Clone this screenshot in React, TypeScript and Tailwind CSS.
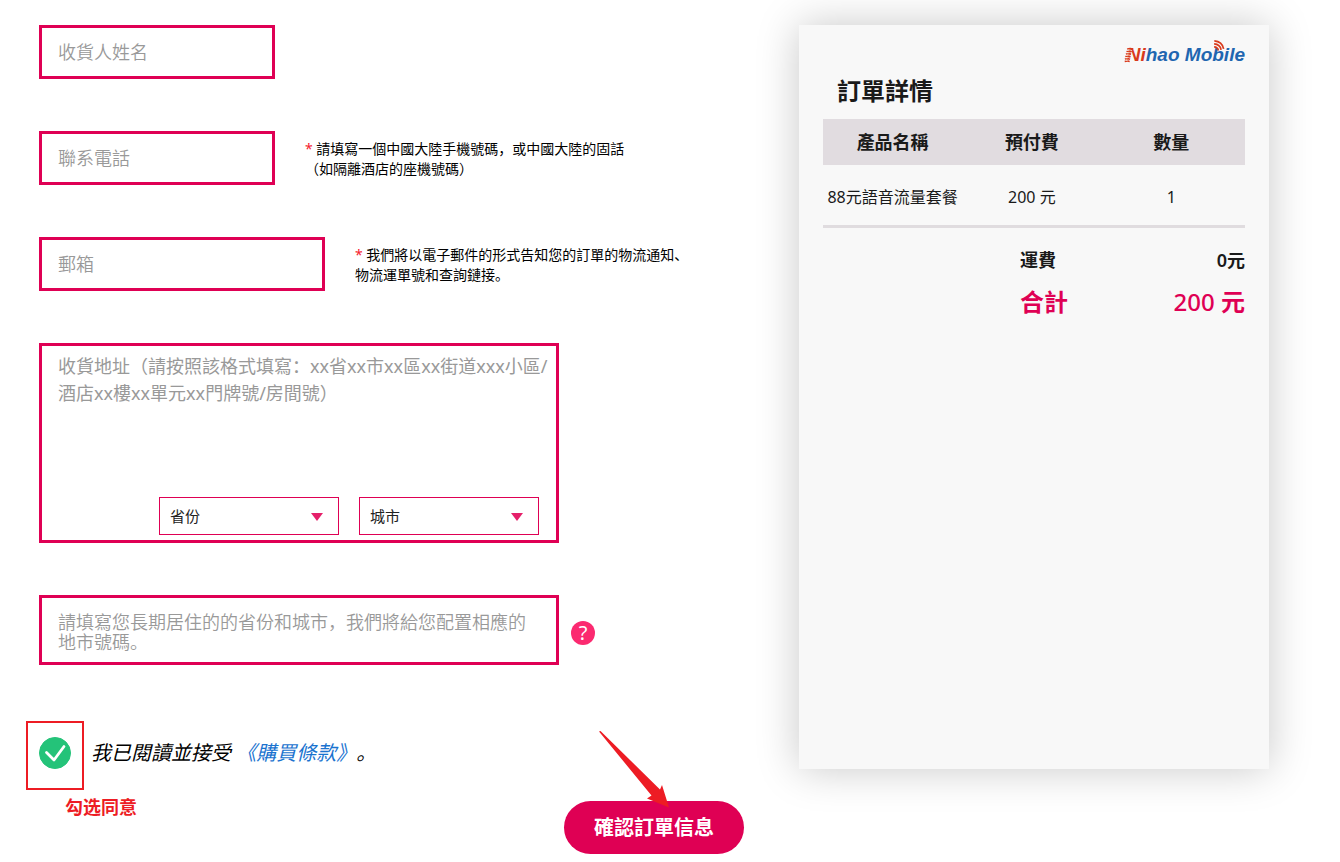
import { useState } from "react";

const PROVINCES = ["北京", "上海", "廣東"];
const CITIES = ["北京", "上海", "廣州", "深圳"];

const PRODUCTS = [{ name: "88元語音流量套餐", fee: 200, count: 1 }];

interface FieldProps {
  label: string;
  type: string;
  wide?: boolean;
  children?: React.ReactNode;
}

function Field({ label, type, wide, children }: FieldProps) {
  return (
    <div className="flex items-center gap-[30px]">
      <input
        type={type}
        aria-label={label}
        placeholder={label}
        className={`h-[54px] shrink-0 border-3 border-[#df0054] bg-white px-4 text-lg font-[350] outline-none placeholder:text-[#999] ${
          wide ? "w-[286px]" : "w-[236px]"
        }`}
      />

      {children && <p className="mt-[2px] text-sm leading-5">{children}</p>}
    </div>
  );
}

interface SelectProps {
  label: string;
  options: string[];
}

function Select({ label, options }: SelectProps) {
  return (
    <div className="relative w-[180px]">
      <select
        aria-label={label}
        defaultValue=""
        className="h-[38px] w-full appearance-none border border-[#df0054] bg-white px-[10px] text-[15px] text-[#222] outline-none"
      >
        <option value="">{label}</option>
        {options.map((option) => (
          <option key={option}>{option}</option>
        ))}
      </select>

      <svg
        viewBox="0 0 12 8"
        className="pointer-events-none absolute right-4 top-4 h-2 w-3 fill-[#e5206a]"
      >
        <path d="M0 0h12L6 8z" />
      </svg>
    </div>
  );
}

function Logo() {
  return (
    <div className="relative ml-auto w-fit font-['Liberation_Sans',sans-serif] text-[19px] font-bold italic leading-8 text-[#1f66b0]">
      <span className="text-[#d93a1c]">Ni</span>hao Mobile
      {/* stripes beside the N and the signal over the b */}
      <svg
        viewBox="0 0 118 32"
        fill="none"
        className="absolute inset-0 h-full w-full overflow-visible"
      >
        <g stroke="#d93a1c" strokeWidth="1.400">
          <path d="M0 10.200q3-1.500 6 0M-.6 12.700q3-1.500 5 0M-1.200 15.200q3-1.500 5 0M-1.800 17.700q3-1.500 5 0M-2.200 20.200q3-1.500 5 0M-2.400 22.500q3-1 5 0" />
        </g>
        <g stroke="#f8f8f8" strokeWidth="0.7">
          <path d="M0 11.500q3-1 5 .2M0 14q3-1 5 .2M-1 16.500q3-1 5 .2M-1 19q3-1 4 .2M-1 21.500q3-1 4 .2" />
        </g>
        <g stroke="#d93a1c" strokeWidth="1.700">
          <path d="M87 7.800q3.500 .2 4.300 3.700M87 4.900q6 .4 7 6M87.200 1.900q7.800 .5 9.300 8" />
        </g>
      </svg>
    </div>
  );
}

function OrderDetails() {
  const total = PRODUCTS.reduce((sum, item) => sum + item.fee * item.count, 0);

  return (
    <aside className="w-[470px] shrink-0 bg-[#f8f8f8] px-6 pt-[14px] text-[#1a1a1a] shadow-[0_0_40px_rgba(0,0,0,0.22)]">
      <Logo />

      <h2 className="ml-[14px] text-2xl font-bold leading-10">訂單詳情</h2>

      <table className="mt-2 w-full table-fixed border-b-3 border-[#e0dcdf] text-center">
        <thead className="h-[46px] bg-[#e1dce0] text-lg">
          <tr>
            <th className="w-[33%]">產品名稱</th>
            <th className="w-[33%]">預付費</th>
            <th className="pr-1">數量</th>
          </tr>
        </thead>
        <tbody>
          {PRODUCTS.map((item) => (
            <tr key={item.name} className="h-[61px]">
              <td className="whitespace-nowrap pt-1">{item.name}</td>
              <td className="pt-1">{item.fee} 元</td>
              <td className="pr-1 pt-1">{item.count}</td>
            </tr>
          ))}
        </tbody>
      </table>

      <dl className="ml-auto mt-4 flex w-[225px] flex-col gap-[10px] font-bold">
        <div className="flex justify-between text-lg leading-8">
          <dt>運費</dt>
          <dd>
            <span className="font-semibold">0</span>元
          </dd>
        </div>
        <div className="flex justify-between text-2xl leading-8 text-[#df0054]">
          <dt>合計</dt>
          <dd>
            <span className="font-medium">{total}</span> 元
          </dd>
        </div>
      </dl>
    </aside>
  );
}

export default function App() {
  const [accepted, setAccepted] = useState(true);

  return (
    <main className="bg-white pb-2 pl-[39px] pr-[71px] pt-[25px] font-['Noto_Sans','Noto_Sans_CJK_SC',sans-serif] text-black [text-spacing-trim:space-all]">
      <form onSubmit={(e) => e.preventDefault()}>
        <div className="flex justify-between gap-10">
          <div className="flex flex-col gap-[52px]">
            <Field label="收貨人姓名" type="text" />

            <Field label="聯系電話" type="tel">
              <span className="text-[#f5222d]">*</span>{" "}
              請填寫一個中國大陸手機號碼，或中國大陸的固話
              <br />
              （如隔離酒店的座機號碼）
            </Field>

            <Field label="郵箱" type="email" wide>
              <span className="text-[#f5222d]">*</span>{" "}
              我們將以電子郵件的形式告知您的訂單的物流通知、
              <br />
              物流運單號和查詢鏈接。
            </Field>

            <div className="flex h-[200px] w-[520px] flex-col border-3 border-[#df0054] pb-[5px]">
              <textarea
                aria-label="收貨地址"
                placeholder="收貨地址（請按照該格式填寫：xx省xx市xx區xx街道xxx小區/酒店xx樓xx單元xx門牌號/房間號）"
                className="flex-1 resize-none pl-4 pt-[7px] text-lg leading-[27px] outline-none placeholder:text-[#999]"
              />
              <div className="flex justify-end gap-5 pr-[17px]">
                <Select label="省份" options={PROVINCES} />
                <Select label="城市" options={CITIES} />
              </div>
            </div>

            <div className="flex items-center gap-3">
              <textarea
                aria-label="長期居住的省份和城市"
                placeholder="請填寫您長期居住的的省份和城市，我們將給您配置相應的地市號碼。"
                className="h-[70px] w-[520px] resize-none overflow-hidden border-3 border-[#df0054] px-4 pt-[14px] text-lg font-[350] leading-5 outline-none placeholder:text-[#999]"
              />
              <button
                type="button"
                className="mt-[6px] flex size-6 items-center justify-center rounded-full bg-[#fb2a70] text-xl leading-6 text-white"
              >
                ?
              </button>
            </div>

            <div className="relative mt-5 flex h-8 items-center gap-5">
              <div className="relative size-8">
                <input
                  id="terms"
                  type="checkbox"
                  checked={accepted}
                  onChange={(e) => setAccepted(e.target.checked)}
                  className="block size-8 appearance-none rounded-full border border-[#24c379] checked:bg-[#24c379]"
                />
                <svg
                  viewBox="0 0 32 32"
                  fill="none"
                  className="pointer-events-none absolute inset-0 size-8 stroke-white"
                >
                  <path
                    d="M7.500 15.500l7.500 7.500L25 9.500"
                    strokeWidth="2.800"
                    strokeLinecap="round"
                    strokeLinejoin="round"
                  />
                </svg>
              </div>

              <p className="text-xl italic">
                <label htmlFor="terms">我已閱讀並接受</label>{" "}
                <a href="#terms" className="text-[#1a73cf]">
                  《購買條款》
                </a>
                。
              </p>

              <div className="pointer-events-none absolute -left-[13px] -top-4 font-bold text-[#ed1c24]">
                <div className="h-[69px] w-[58px] border-2 border-[#ed1c24]" />
                <p className="ml-[39px] text-lg leading-[34px]">勾选同意</p>
              </div>
            </div>
          </div>

          <OrderDetails />
        </div>

        <div className="relative mx-auto mt-8 w-fit">
          <button
            type="submit"
            className="block h-[53px] rounded-full bg-[#df0054] px-[30px] text-xl font-bold text-white"
          >
            確認訂單信息
          </button>

          <svg
            viewBox="0 0 70 77"
            className="pointer-events-none absolute -top-[70px] left-[35px] h-[77px] w-[70px] fill-[#ed1c24]"
          >
            <path d="M0 .5L1.500 0L61 58.500L63 54L70 76.500L48 67.500L52.500 64.500z" />
          </svg>
        </div>
      </form>
    </main>
  );
}
